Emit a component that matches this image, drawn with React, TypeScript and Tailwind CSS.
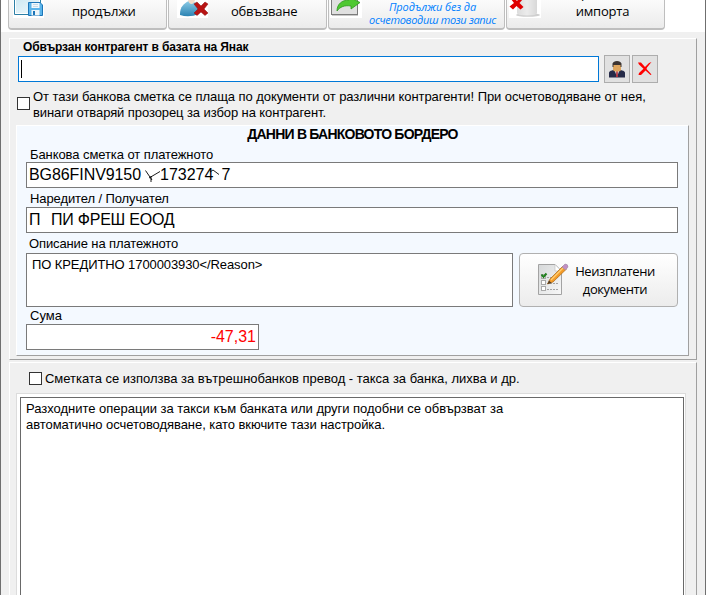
import type { ReactNode } from 'react';

const sans = "font-['Liberation_Sans',Arial,sans-serif]";
const humanist = "font-['Open_Sans','Noto_Sans',sans-serif]";

function ToolButton({ className, children }: { className: string; children: ReactNode }) {
  return (
    <button
      className={`relative shrink-0 overflow-hidden rounded-b-[4px] border border-t-0 border-b-2 border-[#bebebe] bg-linear-to-b from-[#fbfbfb] to-[#ebebeb] ${className}`}
    >
      {children}
    </button>
  );
}

function Field({ className, children }: { className: string; children?: ReactNode }) {
  return <div className={`border border-[#7a7a7a] bg-white text-black ${className}`}>{children}</div>;
}

function Check() {
  return <span className="block size-[13px] shrink-0 border border-[#333333] bg-white" />;
}

function SaveIcon() {
  return (
    <svg width="32" height="20" viewBox="0 0 32 20" className="shrink-0">
      <defs>
        <linearGradient id="screen" x1="0" y1="0" x2="1" y2="1">
          <stop offset="0" stopColor="#cfe9f3" />
          <stop offset="1" stopColor="#eff8fb" />
        </linearGradient>
      </defs>
      <rect width="31" height="18" fill="#fff" />
      <path d="M1.500 0V14.500H17M27.500 0V3" fill="none" stroke="#2c7fa6" />
      <path d="M3 0H26V3H16V13H3Z" fill="url(#screen)" />
      <path d="M15.500 2.500H27L29.500 5V15.500H15.500Z" fill="#5ab4ea" stroke="#1c75b8" />
      <rect x="18.500" y="3" width="8" height="5" fill="#f0f8fd" />
      <path d="M20 4.500H25M20 6.500H25" stroke="#b5cfdd" strokeWidth="0.700" />
      <rect x="18.500" y="10" width="8" height="5.500" fill="#eef5f8" />
      <rect x="20" y="11" width="2" height="4" fill="#1c75b8" />
    </svg>
  );
}

function UserRemoveIcon() {
  return (
    <svg width="32" height="20" viewBox="0 0 32 20" className="shrink-0">
      <defs>
        <linearGradient id="body" x1="0" y1="0" x2="0" y2="1">
          <stop offset="0" stopColor="#8ccbe6" />
          <stop offset="1" stopColor="#2b83b3" />
        </linearGradient>
      </defs>
      <rect width="31" height="18" fill="#fff" />
      <path d="M3 14C3 7 7 3 12 1L20 3L22 14Q12 18 3 15Z" fill="url(#body)" />
      <path d="M11 0H18Q17 4 14.500 4Q12 4 11 0Z" fill="#f1dccb" />
      <path d="M17 4L20 2L24 6L28 2L31 4L27 9L31 13L28 15.500L24 12L20 15.500L17 13L21 9Z" fill="#b81414" stroke="#8d1010" strokeWidth="0.500" />
    </svg>
  );
}

function ForwardIcon() {
  return (
    <svg width="32" height="20" viewBox="0 0 32 20" className="shrink-0">
      <rect width="32" height="18" fill="#fff" />
      <rect x="1.500" y="-3" width="26" height="17.500" fill="#e0e0e0" stroke="#7b7b7b" />
      <path d="M2 15.500H28" stroke="#c9c9c9" />
      <path d="M7 11C7 4 12 0 19 0V-3L30 2.500L21 9V6C14 5 10 7 7 11Z" fill="#4fc832" stroke="#2b981a" strokeWidth="0.800" />
    </svg>
  );
}

function DeleteDatabaseIcon() {
  return (
    <svg width="32" height="20" viewBox="0 0 32 20" className="shrink-0">
      <defs>
        <linearGradient id="drum" x1="0" x2="1">
          <stop offset="0" stopColor="#dcdcdc" />
          <stop offset="0.500" stopColor="#ececec" />
          <stop offset="1" stopColor="#d8d8d8" />
        </linearGradient>
      </defs>
      <rect width="32" height="18" fill="#fff" />
      <ellipse cx="19" cy="15" rx="12" ry="1.800" fill="#cfcfcf" />
      <path d="M8 0H28V13Q28 15.500 18 15.500Q8 15.500 8 13Z" fill="url(#drum)" />
      <path d="M2 -1H6L8 1L10 -1H14L10.500 3L14.500 7L11.500 9.500L7.500 6L4 9.500L0.500 6.500L5 3Z" fill="#df0000" />
    </svg>
  );
}

function PersonIcon() {
  return (
    <svg width="16" height="17" viewBox="0 0 16 17" className="shrink-0">
      <path d="M0 16.500V12Q0 10 3 9.500L6 8H10L13 9.500Q16 10 16 12V16.500Z" fill="#262b49" />
      <path d="M5.500 9H10.500L8 16Z" fill="#e6e6ee" />
      <path d="M7.300 10H8.700L9 16H7Z" fill="#b0303a" />
      <rect x="4" y="2.500" width="8" height="8" rx="2.500" fill="#dfa65e" />
      <path d="M3.500 6V2.500Q4.500 0 8 0Q11.500 0 12.500 2.500V6H11.500V4H4.500V6Z" fill="#3d3532" />
    </svg>
  );
}

function RedCross() {
  return (
    <svg width="14" height="14" viewBox="0 0 14 14" className="shrink-0">
      <path d="M0 0.500H3L7 5L11 1L13.500 0L9 5.500L8.500 7L13.500 12.500L12.500 13L7.500 8.500L3 13H0.500L1 11L5.500 6.800L1 2.500Z" fill="#f00" />
    </svg>
  );
}

function ChecklistIcon() {
  return (
    <svg width="32" height="33" viewBox="0 0 32 33" className="shrink-0">
      <defs>
        <linearGradient id="sheet" x1="0" y1="0" x2="1" y2="1">
          <stop offset="0" stopColor="#d6d8d9" />
          <stop offset="1" stopColor="#f8f8f8" />
        </linearGradient>
      </defs>
      <path d="M1.500 1.500H18L24.500 8V31.500H1.500Z" fill="url(#sheet)" stroke="#a3a3a3" />
      <path d="M18 1.500V8H24.500Z" fill="#fff" stroke="#bbb" strokeWidth="0.600" />
      <g fill="#fff" stroke="#aaa">
        <rect x="4.500" y="11.500" width="4" height="4" />
        <rect x="4.500" y="17.500" width="4" height="4" />
        <rect x="4.500" y="23.500" width="4" height="4" />
      </g>
      <path d="M10 14.500H21M10 20.500H21M10 26.500H21" stroke="#a5a5a5" strokeDasharray="2 1" />
      <path d="M4.500 11.500L6.500 14L9.500 10.500" fill="none" stroke="#22801f" strokeWidth="2" />
      <path d="M10.500 21L13 16L26 3L29.500 6L16 19Z" fill="#f49b28" stroke="#a96818" strokeWidth="0.700" />
      <path d="M14 17L27 4" stroke="#ffd075" strokeWidth="1.200" />
      <path d="M10.500 21L12 17.500L14.500 20Z" fill="#4a3a28" />
      <path d="M25 4L28 1Q31 1 31 4L28.500 7Z" fill="#c28fc4" stroke="#9c8aa3" strokeWidth="0.600" />
    </svg>
  );
}

export default function App() {
  return (
    <div className={`flex h-[595px] w-[706px] flex-col overflow-hidden border-x border-[#6f6f6f] bg-[#f0f0f0] text-[13px] leading-4 text-black ${sans}`}>
      <header className={`flex h-8 shrink-0 items-start bg-white pl-[7px] ${humanist}`}>
        <ToolButton className="mr-px h-[30px] w-[159px]">
          <div className="flex h-full items-start pl-1">
            <SaveIcon />
            <span className="ml-[27px] mt-[3px] whitespace-nowrap tracking-[-0.25px]">продължи</span>
          </div>
        </ToolButton>
        <ToolButton className="mr-px h-[30px] w-[159px]">
          <div className="flex h-full items-start pl-2">
            <UserRemoveIcon />
            <span className="ml-[22px] mt-[3px] whitespace-nowrap tracking-[-0.25px]">обвъзване</span>
          </div>
        </ToolButton>
        <ToolButton className="mr-px h-[30px] w-[177px]">
          <div className="flex h-full items-start pl-px">
            <ForwardIcon />
            <span className="ml-[7px] flex w-[127px] flex-col items-center whitespace-nowrap text-[11px] italic leading-[13px] tracking-[-0.1px] text-[#0080ff]">
              <span>Продължи без да</span>
              <span className="tracking-[-0.33px]">осчетоводиш този запис</span>
            </span>
          </div>
        </ToolButton>
        <ToolButton className="h-[30px] w-[159px]">
          <div className="flex h-full items-start pl-[2px]">
            <DeleteDatabaseIcon />
            <span className="-mt-[16px] ml-[24px] w-[75px] whitespace-nowrap text-center leading-[18px] tracking-[-0.2px]">Прекъсни<br />импорта</span>
          </div>
        </ToolButton>
      </header>

      <section className="ml-2 mt-[6px] h-[322px] w-[688px] shrink-0 border border-[#a0a0a0] border-l-white border-t-white">
        <div className="ml-[13px] h-[16px] whitespace-nowrap text-[12px] font-bold tracking-[-0.14px]">Обвързан контрагент в базата на Янак</div>
        <div className="ml-[8px] flex items-center">
          <div className="flex h-[26px] w-[581px] items-center border border-[#0078d7] bg-white pl-[2px]">
            <span className="h-[18px] w-px bg-black" />
          </div>
          <button className="ml-[5px] flex h-7 w-[26px] items-center justify-center border border-[#adadad] bg-[#e1e1e1]"><PersonIcon /></button>
          <button className="ml-[2px] flex h-7 w-[26px] items-center justify-center border border-[#adadad] bg-[#e1e1e1]"><RedCross /></button>
        </div>
        <div className="ml-[7px] mt-[6px] flex h-[36px]">
          <div className="mr-[3px] mt-[8px]"><Check /></div>
          <p className="whitespace-nowrap text-[13px]">
            <span className="tracking-[-0.058px]">От тази банкова сметка се плаща по документи от различни контрагенти! При осчетоводяване от нея,</span><br />
            <span className="tracking-[-0.085px]">винаги отваряй прозорец за избор на контрагент.</span>
          </p>
        </div>
        <div className="ml-[6px] h-[231px] w-[673px] border border-[#a0a0a0] border-l-white border-t-white bg-[#f4f9ff] pl-[9px]">
          <h2 className="h-[21px] w-[653px] whitespace-nowrap text-center text-[14px] font-bold tracking-[-0.78px]">ДАННИ В БАНКОВОТО БОРДЕРО</h2>
          <div className="h-[15px] pl-1 tracking-[-0.08px]">Банкова сметка от платежното</div>
          <Field className="h-[26px] w-[652px]">
            <div className="flex h-full items-center whitespace-pre pl-[2px] text-[16px]">
              <span className="tracking-[-0.08px]">BG86FINV9150</span>
              <svg width="19" height="22" viewBox="0 0 19 22" className="shrink-0">
                <path d="M4.500 6.500L11 16M8 14L19 7.500M10 18V12" fill="none" stroke="#000" strokeWidth="0.900" />
              </svg>
              <span>173274</span>
              <svg width="10" height="22" viewBox="0 0 10 22" className="-ml-[3px] mr-px shrink-0">
                <path d="M0 8L3 6L9 10.500" fill="none" stroke="#000" strokeWidth="0.900" />
              </svg>
              <span>7</span>
            </div>
          </Field>
          <div className="h-[19px] pl-1 pt-[3px] tracking-[-0.1px]">Наредител / Получател</div>
          <Field className="h-[26px] w-[652px]">
            <div className="flex h-full items-center whitespace-nowrap pl-[2px] text-[16px]">
              <span>П</span>
              <span className="ml-[10.500px] tracking-[-0.23px]">ПИ ФРЕШ ЕООД</span>
            </div>
          </Field>
          <div className="h-5 pl-[3px] pt-[3px] tracking-[-0.12px]">Описание на платежното</div>
          <div className="flex">
            <Field className="h-[54px] w-[487px]">
              <div className="pl-[5px] pt-[3px] tracking-[-0.09px]">ПО КРЕДИТНО 1700003930&lt;/Reason&gt;</div>
            </Field>
            <button className={`ml-[6px] flex h-[54px] w-[159px] items-start rounded-[4px] border border-[#b0b0b0] bg-linear-to-b from-white to-[#ececec] pl-[17px] pt-[9px] ${humanist}`}>
              <ChecklistIcon />
              <span className="-mt-px ml-1 w-[84px] whitespace-nowrap text-center leading-[18px] tracking-[-0.4px]">Неизплатени<br />документи</span>
            </button>
          </div>
          <div className="h-[17px] pl-1 pt-px">Сума</div>
          <Field className="h-[26px] w-[233px]">
            <div className="flex h-full items-center justify-end pr-[2px] text-[16px] text-[#ff0000]">-47,31</div>
          </Field>
        </div>
      </section>

      <section className="ml-2 mt-[2px] flex w-[688px] grow flex-col border-l border-r border-t border-[#a0a0a0] border-l-white border-t-white">
        <div className="ml-[19px] mt-[8px] flex h-4 items-start">
          <span className="mt-px"><Check /></span>
          <span className="ml-[3px] whitespace-nowrap tracking-[-0.015px]">Сметката се използва за вътрешнобанков превод - такса за банка, лихва и др.</span>
        </div>
        <div className="ml-[6px] mt-[6px] flex w-[670px] grow flex-col border border-b-0 border-[#dcdcdc] bg-white pl-[3px] pt-[3px]">
          <div className="w-[664px] grow border border-b-0 border-[#696969] pl-[5px] pt-[3px]">
            <p className="whitespace-nowrap">
              <span className="tracking-[-0.015px]">Разходните операции за такси към банката или други подобни се обвързват за</span><br />
              <span className="tracking-[-0.06px]">автоматично осчетоводяване, като вкючите тази настройка.</span>
            </p>
          </div>
        </div>
      </section>
    </div>
  );
}
